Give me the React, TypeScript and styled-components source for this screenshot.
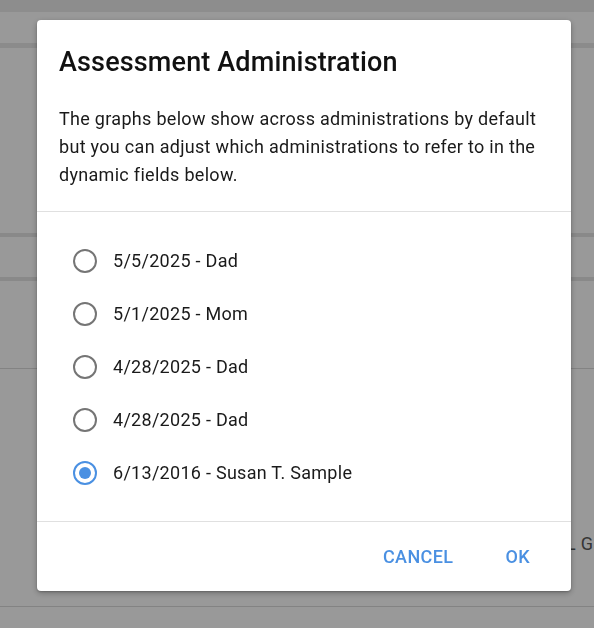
import React, { useState } from 'react';
import styled, { createGlobalStyle } from 'styled-components';

const GlobalStyle = createGlobalStyle`
  html, body {
    margin: 0;
    padding: 0;
    overflow: hidden;
    background: #ffffff;
    font-family: Roboto, "Liberation Sans", Arial, sans-serif;
  }
`;

const Page = styled.div`
  width: 594px;
  height: 628px;
  display: flex;
  flex-direction: column;
  background: #ffffff;
`;

const Band = styled.div<{ $h: number; $top: number; $color: string }>`
  height: ${p => p.$h}px;
  margin-top: ${p => p.$top}px;
  background: ${p => p.$color};
  flex-shrink: 0;
`;

const PageRow = styled.div`
  height: 237px;
  flex-shrink: 0;
  display: flex;
  align-items: flex-end;
  padding: 0 0 52px 544px;
  box-sizing: border-box;
  white-space: nowrap;
  overflow: hidden;
  color: #5a5a5a;
  font-size: 18px;
  letter-spacing: 0.3px;
`;

const Backdrop = styled.div`
  position: fixed;
  inset: 0;
  background: rgba(0, 0, 0, 0.4);
  display: flex;
  justify-content: center;
  align-items: flex-start;
  padding-top: 20px;
`;

const Dialog = styled.div`
  width: 534px;
  background: #ffffff;
  border-radius: 4px;
  box-shadow: 0 2px 6px rgba(0, 0, 0, 0.28), 0 1px 2px rgba(0, 0, 0, 0.2);
  display: flex;
  flex-direction: column;
  color: #111111;
  margin-left: 14px;
`;

const Header = styled.div`
  padding: 26px 20px 22px 22px;
  border-bottom: 1px solid #e0e0e0;
`;

const Title = styled.h2`
  margin: 0 0 27px;
  font-size: 27px;
  line-height: 32px;
  font-weight: 500;
  letter-spacing: 0.15px;
  color: #111111;
`;

const Description = styled.p`
  margin: 0;
  font-size: 18px;
  line-height: 28px;
  letter-spacing: 0.3px;
  color: #1a1a1a;
`;

const List = styled.div`
  padding: 22px 0 22px 36px;
  display: flex;
  flex-direction: column;
  border-bottom: 1px solid #e0e0e0;
`;

const Option = styled.label`
  height: 53px;
  display: flex;
  align-items: center;
  gap: 16px;
  font-size: 18px;
  letter-spacing: 0.28px;
  color: #1a1a1a;
  cursor: pointer;
`;

const RadioCircle = styled.span<{ $checked: boolean }>`
  width: 24px;
  height: 24px;
  box-sizing: border-box;
  border-radius: 50%;
  border: 2px solid ${p => (p.$checked ? '#4a90e2' : '#757575')};
  display: flex;
  align-items: center;
  justify-content: center;
  flex-shrink: 0;

  &::after {
    content: '';
    width: 12px;
    height: 12px;
    border-radius: 50%;
    background: #4a90e2;
    display: ${p => (p.$checked ? 'block' : 'none')};
  }
`;

const Footer = styled.div`
  display: flex;
  justify-content: flex-end;
  align-items: center;
  gap: 20px;
  padding: 16px 25px 17px;
`;

const TextButton = styled.button`
  height: 36px;
  padding: 0 16px;
  border: none;
  background: transparent;
  color: #4a90e2;
  font-family: Roboto, "Liberation Sans", Arial, sans-serif;
  font-size: 18px;
  font-weight: 500;
  letter-spacing: 0.4px;
  text-transform: uppercase;
  cursor: pointer;
`;

const options = [
  '5/5/2025 - Dad',
  '5/1/2025 - Mom',
  '4/28/2025 - Dad',
  '4/28/2025 - Dad',
  '6/13/2016 - Susan T. Sample',
];

export default function App() {
  const [selected, setSelected] = useState(4);

  return (
    <>
      <GlobalStyle />
      <Page>
        <Band $h={12} $top={0} $color="#ececec" />
        <Band $h={5} $top={31} $color="#e8e8e8" />
        <Band $h={4} $top={185} $color="#e4e4e4" />
        <Band $h={4} $top={40} $color="#e4e4e4" />
        <Band $h={1} $top={87} $color="#dadada" />
        <PageRow>ALL G</PageRow>
        <Band $h={1} $top={0} $color="#dadada" />
      </Page>
      <Backdrop>
        <Dialog>
          <Header>
            <Title>Assessment Administration</Title>
            <Description>
              The graphs below show across administrations by default but you can adjust which
              administrations to refer to in the dynamic fields below.
            </Description>
          </Header>
          <List>
            {options.map((label, i) => (
              <Option key={i} onClick={() => setSelected(i)}>
                <RadioCircle $checked={selected === i} />
                {label}
              </Option>
            ))}
          </List>
          <Footer>
            <TextButton>Cancel</TextButton>
            <TextButton>OK</TextButton>
          </Footer>
        </Dialog>
      </Backdrop>
    </>
  );
}
